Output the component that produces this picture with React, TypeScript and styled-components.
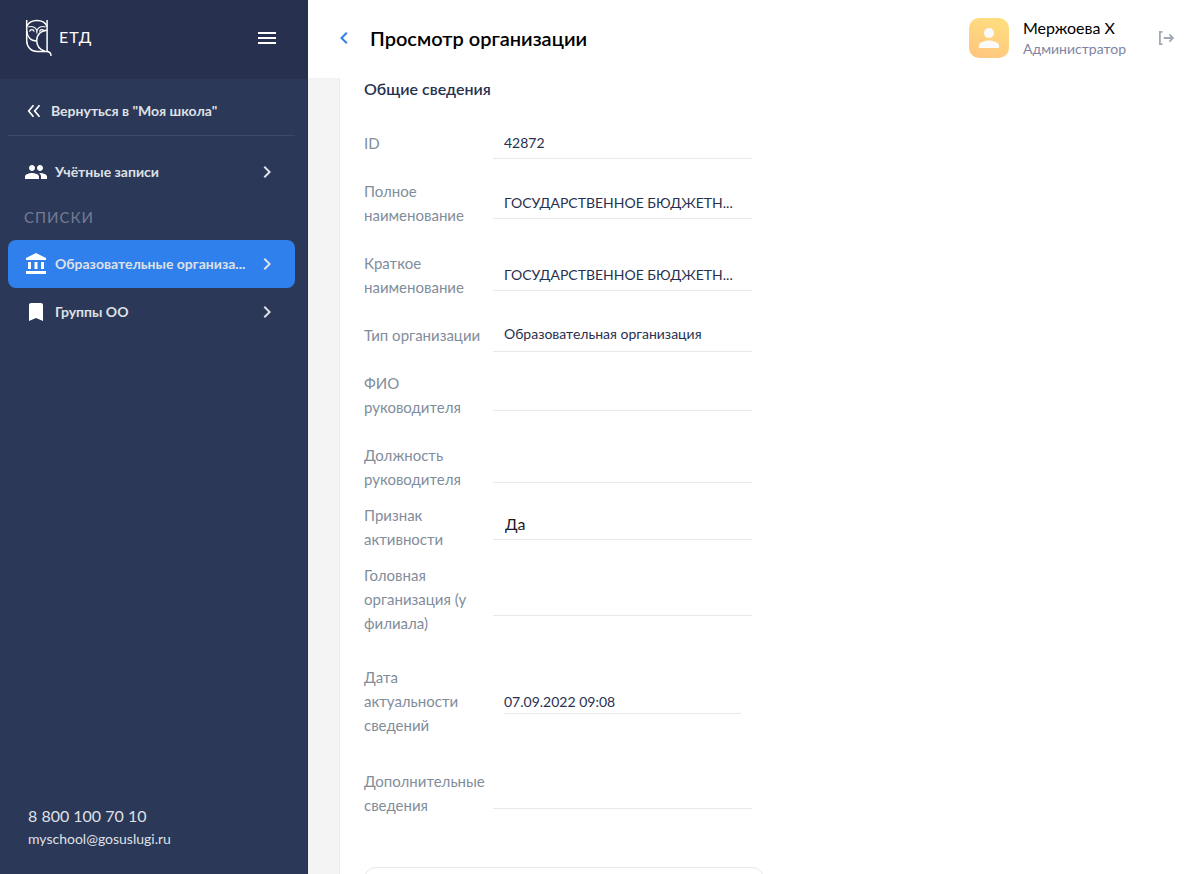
import React from "react";
import styled, { createGlobalStyle } from "styled-components";
import {
  MdAccountBalance,
  MdBookmark,
  MdChevronRight,
  MdMenu,
  MdPeople,
  MdPerson,
} from "react-icons/md";

const GlobalStyle = createGlobalStyle`
  *, *::before, *::after { box-sizing: border-box; }
  body {
    margin: 0;
    background: #fff;
    color: #000;
    font-family: Lato, "Liberation Sans", sans-serif;
    font-size: 15px;
  }
  button, input { font: inherit; }
`;

const Page = styled.div`
  display: flex;
  height: 100vh;
  overflow: hidden;
`;

const Sidebar = styled.aside`
  display: flex;
  flex-direction: column;
  flex: 0 0 308px;
  background: #2c3858;
  border-right: 1px solid #27314f;
`;

const SidebarTop = styled.div`
  display: flex;
  align-items: center;
  justify-content: space-between;
  height: 79px;
  padding: 0 28px 4px 24px;
  background: #27314f;
`;

const Logo = styled.a`
  display: flex;
  align-items: center;
  gap: 6px;
  color: #fff;
  text-decoration: none;
  font-size: 16px;
  line-height: 20px;
`;

const LogoText = styled.span`
  padding-bottom: 2px;
  letter-spacing: 1px;
`;

const IconButton = styled.button<{ $color: string }>`
  display: flex;
  align-items: center;
  justify-content: center;
  width: 24px;
  height: 24px;
  padding: 0;
  border: 0;
  background: none;
  color: ${(p) => p.$color};
  cursor: pointer;
`;

const BackLink = styled.a`
  display: flex;
  align-items: center;
  gap: 8px;
  height: 57px;
  margin: 0 12px 0 8px;
  padding: 6px 16px 0;
  border-bottom: 1px solid #3d4969;
  color: #dfe1e6;
  font-weight: 700;
  font-size: 14px;
  text-decoration: none;
`;

const Nav = styled.nav`
  display: flex;
  flex-direction: column;
  flex: 1;
  padding: 12px 12px 0 8px;
`;

const NavItem = styled.a<{ $active?: boolean }>`
  display: flex;
  align-items: center;
  gap: 7px;
  height: 48px;
  padding: 0 16px;
  border-radius: 8px;
  background: ${(p) => (p.$active ? "#2f80ed" : "transparent")};
  color: #dfe1e6;
  font-weight: 700;
  font-size: 14px;
  text-decoration: none;

  svg { flex: none; }
  svg:first-child { color: #fff; }
`;

const NavText = styled.span`
  flex: 1;
  padding-bottom: 2px;
  white-space: nowrap;
`;

const NavHeading = styled.h2`
  margin: 0;
  padding: 0 16px 2px;
  color: #747c93;
  font-size: 15px;
  font-weight: 400;
  line-height: 42px;
  letter-spacing: 1px;
`;

const Contacts = styled.address`
  display: flex;
  flex-direction: column;
  padding: 0 28px 24px;
  font-style: normal;
`;

const PhoneLink = styled.a`
  color: #dfe1e6;
  font-size: 16px;
  line-height: 24px;
  text-decoration: none;
`;

const MailLink = styled(PhoneLink)`
  font-size: 14px;
  line-height: 22px;
`;

const Content = styled.div`
  display: flex;
  flex-direction: column;
  flex: 1;
  min-width: 0;
`;

const Header = styled.header`
  display: flex;
  align-items: center;
  flex: none;
  height: 78px;
  padding: 0 8px 2px 24px;
`;

const Title = styled.h1`
  flex: 1;
  margin: 0 0 0 14px;
  font-size: 20px;
  font-weight: 600;
  line-height: 28px;
`;

const Avatar = styled.div`
  display: flex;
  align-items: center;
  justify-content: center;
  width: 40px;
  height: 40px;
  border-radius: 10px;
  background: linear-gradient(20deg, #ffc480, #ffe07f);
  color: #fafafa;
`;

const User = styled.div`
  display: flex;
  flex-direction: column;
  margin: 0 28px 0 14px;
  line-height: 21px;
`;

const UserName = styled.span`
  font-size: 16px;
`;

const UserRole = styled.span`
  color: #7d84a0;
  font-size: 14px;
`;

const Body = styled.div`
  display: flex;
  flex: 1;
  min-height: 0;
  padding-left: 31px;
  background: #f4f4f4;
`;

const Panel = styled.main`
  flex: 1;
  padding: 0 24px;
  border-left: 1px solid #ebebeb;
  background: #fff;
  overflow-y: auto;
  scrollbar-width: none;
`;

const SectionTitle = styled.h2`
  margin: 0 0 31px;
  color: #27314f;
  font-size: 16px;
  font-weight: 600;
  line-height: 22px;
`;

const Row = styled.div<{ $before: number; $after: number }>`
  display: flex;
  align-items: center;
  max-width: 388px;
  padding: ${(p) => p.$before}px 0 ${(p) => p.$after}px;
`;

const Label = styled.label`
  flex: 0 0 129px;
  color: #828d9c;
  line-height: 24px;
`;

type Variant = "plain" | "tall" | "large" | "inset";

const boxes: Record<Variant, { height: number; margin: string; padding: string }> = {
  plain: { height: 30, margin: "-3px 0 -5px", padding: "0 11px 2px" },
  tall: { height: 32, margin: "-3px 0 -5px", padding: "0 11px 4px" },
  large: { height: 28, margin: "-5px 0 -3px", padding: "0 12px 4px" },
  inset: { height: 24, margin: "-3px 11px -5px", padding: "0" },
};

const Input = styled.input<{ $variant: Variant }>`
  flex: 1;
  min-width: 0;
  height: ${(p) => boxes[p.$variant].height}px;
  margin: ${(p) => boxes[p.$variant].margin};
  padding: ${(p) => boxes[p.$variant].padding};
  border: 0;
  border-bottom: 1px solid #e8e8ee;
  border-radius: 0;
  background: transparent;
  color: ${(p) => (p.$variant === "large" ? "#1c1c28" : "#27314f")};
  font-size: ${(p) => (p.$variant === "large" ? 16 : 14)}px;
  outline: none;
`;

const Card = styled.section`
  max-width: 400px;
  height: 120px;
  margin-top: 38px;
  border: 1px solid #e8e8ee;
  border-radius: 12px;
`;

type Field = {
  id: string;
  label: string;
  value?: string;
  before?: number;
  after?: number;
  variant?: Variant;
};

const fields: Field[] = [
  { id: "org-id", label: "ID", value: "42872", before: 0 },
  { id: "full-name", label: "Полное наименование", value: "ГОСУДАРСТВЕННОЕ БЮДЖЕТН..." },
  { id: "short-name", label: "Краткое наименование", value: "ГОСУДАРСТВЕННОЕ БЮДЖЕТН..." },
  { id: "org-type", label: "Тип организации", value: "Образовательная организация", variant: "tall" },
  { id: "head-name", label: "ФИО руководителя" },
  { id: "head-post", label: "Должность руководителя" },
  { id: "active", label: "Признак активности", value: "Да", before: 0, after: 0, variant: "large" },
  { id: "parent", label: "Головная организация (у филиала)", variant: "tall" },
  { id: "date", label: "Дата актуальности сведений", value: "07.09.2022 09:08", before: 18, after: 20, variant: "inset" },
  { id: "extra", label: "Дополнительные сведения" },
];

const OwlMark = () => (
  <svg width="29" height="38" viewBox="0 0 29 38" fill="none" stroke="#fff" strokeWidth="1.5" aria-hidden="true">
    <path d="M2.700 1v20.500c0 6.500 4.500 11 10.500 11h9.400c2.800 0 4.300 1.500 4.500 4.400" />
    <path d="M23.100 1v31.400" />
    <path d="M2.700 7.500c1.800-3.700 5.500-5.900 10.200-5.900s8.500 2.200 10.200 5.900" />
    <path d="M2.700 11.500c.400 6 3.900 10.300 9.900 10.500" />
    <path d="M23.100 11.200c-6.200.3-10.400 4.400-10.400 10.500 0 5 3 8.600 8 10.600" />
    <path d="M4.200 8.100c4-1.500 7.500.1 8.700 3.500 1.200-3.400 4.700-5 8.700-3.500" strokeWidth="1.100" />
    <path d="M5.500 12.600c.5-2.600 4.200-2.600 4.700 0M15.500 12.600c.5-2.600 4.200-2.600 4.700 0M12.900 11.600v3" strokeWidth="1.100" />
  </svg>
);

const DoubleChevronLeft = () => (
  <svg width="19" height="24" viewBox="0 0 19 24" fill="none" stroke="#fff" strokeWidth="1.700" aria-hidden="true">
    <path d="M9.500 7.300 4.700 13l4.800 5.700M15.500 7.300 10.700 13l4.800 5.700" />
  </svg>
);

const ChevronLeft = () => (
  <svg width="24" height="24" viewBox="0 0 24 24" fill="none" stroke="#2f80ed" strokeWidth="2" aria-hidden="true">
    <path d="m14.800 6.700-5.300 5.300 5.300 5.300" />
  </svg>
);

const LogoutIcon = () => (
  <svg width="24" height="24" viewBox="0 0 24 24" fill="none" stroke="#a2a8b4" strokeWidth="1.800" aria-hidden="true">
    <path d="M8.500 5.900H5.900v12.200h2.600M9.800 12h9M15.300 8.300 19 12l-3.700 3.700" />
  </svg>
);

export default function App() {
  return (
    <>
      <GlobalStyle />
      <Page>
        <Sidebar>
          <SidebarTop>
            <Logo href="#">
              <OwlMark />
              <LogoText>ЕТД</LogoText>
            </Logo>
            <IconButton type="button" aria-label="Меню" $color="#fff">
              <MdMenu size={24} />
            </IconButton>
          </SidebarTop>
          <BackLink href="#">
            <DoubleChevronLeft />
            Вернуться в "Моя школа"
          </BackLink>
          <Nav>
            <NavItem href="#">
              <MdPeople size={24} />
              <NavText>Учётные записи</NavText>
              <MdChevronRight size={24} />
            </NavItem>
            <NavHeading>СПИСКИ</NavHeading>
            <NavItem href="#" $active>
              <MdAccountBalance size={24} />
              <NavText>Образовательные организа...</NavText>
              <MdChevronRight size={24} />
            </NavItem>
            <NavItem href="#">
              <MdBookmark size={24} />
              <NavText>Группы ОО</NavText>
              <MdChevronRight size={24} />
            </NavItem>
          </Nav>
          <Contacts>
            <PhoneLink href="tel:88001007010">8 800 100 70 10</PhoneLink>
            <MailLink href="mailto:myschool@gosuslugi.ru">myschool@gosuslugi.ru</MailLink>
          </Contacts>
        </Sidebar>
        <Content>
          <Header>
            <IconButton type="button" aria-label="Назад" $color="#2f80ed">
              <ChevronLeft />
            </IconButton>
            <Title>Просмотр организации</Title>
            <Avatar>
              <MdPerson size={30} />
            </Avatar>
            <User>
              <UserName>Мержоева Х</UserName>
              <UserRole>Администратор</UserRole>
            </User>
            <IconButton type="button" aria-label="Выйти" $color="#a2a8b4">
              <LogoutIcon />
            </IconButton>
          </Header>
          <Body>
            <Panel>
              <SectionTitle>Общие сведения</SectionTitle>
              {fields.map((f) => (
                <Row key={f.id} $before={f.before ?? 12} $after={f.after ?? 12}>
                  <Label htmlFor={f.id}>{f.label}</Label>
                  <Input id={f.id} readOnly value={f.value ?? ""} $variant={f.variant ?? "plain"} />
                </Row>
              ))}
              <Card />
            </Panel>
          </Body>
        </Content>
      </Page>
    </>
  );
}
